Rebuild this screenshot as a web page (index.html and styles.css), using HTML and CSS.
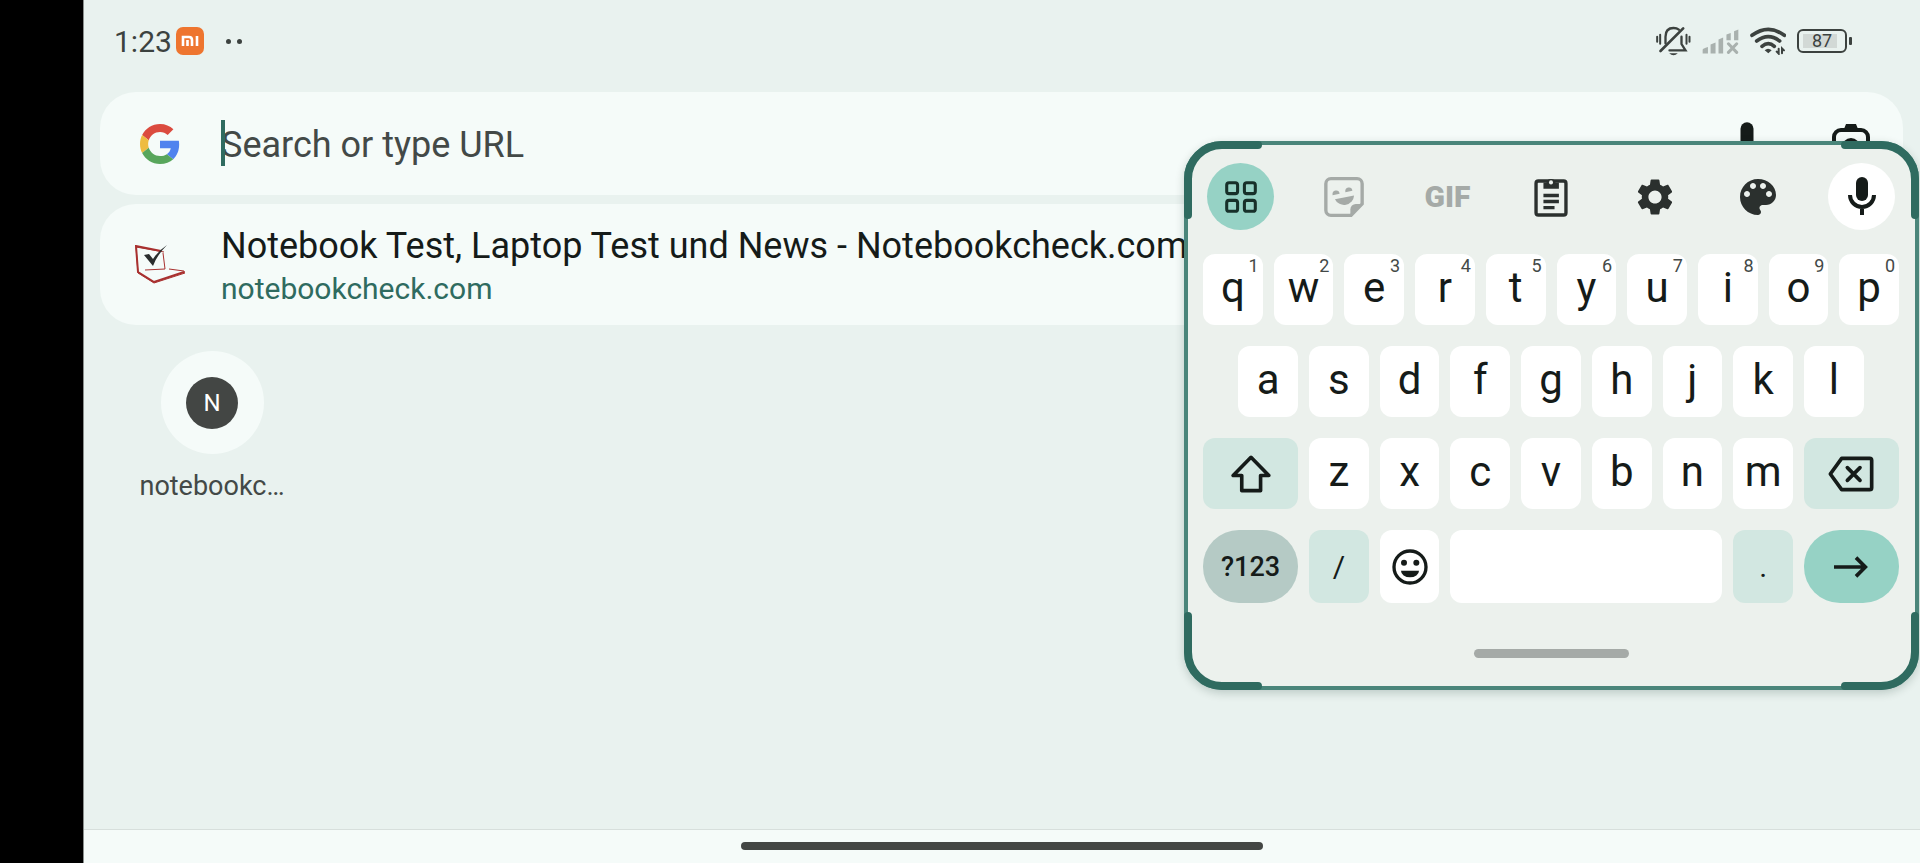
FILE: index.html
```
<!DOCTYPE html>
<html lang="en">
<head>
    <meta charset="UTF-8">
    <meta name="viewport" content="width=device-width, initial-scale=1.0">
    <title>Search</title>
    <link rel="stylesheet" href="styles.css">
</head>
<body>
    <div class="cutout"></div>
    <div class="screen">
        <header class="status-bar">
            <span class="clock">1:23</span>
            <svg class="mi-logo" viewBox="0 0 28 28">
                <rect width="28" height="28" rx="7" fill="#ee752f"/>
                <path d="M7 19V10h6q3 0 3 3v6M11.500 13v6M21 9v10" fill="none" stroke="#fff" stroke-width="2.600"/>
            </svg>
            <span class="dots"><i></i><i></i></span>
            <div class="status-icons">
                <svg class="bell" viewBox="114 80 104 90" fill="none" stroke="#3c423f" stroke-width="7" stroke-linecap="round">
                    <path d="M117 112v15M126 106v27M205 106v27M214 112v15" stroke-width="6"/>
                    <path d="M142 132v-20q0-26 24-26 10 0 16 5M190 112v22l12 19h-48"/>
                    <path d="M127 155L195 87" stroke-width="8"/>
                    <path d="M153 162h26q-13 12-26 0z" fill="#3c423f" stroke="none"/>
                </svg>
                <svg class="signal" viewBox="250 88 112 74" fill="#a9b1ae">
                    <path d="M252 150q0-3 16-8v19h-16zM276 134l15-6v33h-15zM300 119l14-6v48h-14zM324 104l13-5v22h-13zM347 94l13-5v32h-13z"/>
                    <path d="M330 132l25 26M355 132l-25 26" stroke="#a9b1ae" stroke-width="9" stroke-linecap="round"/>
                </svg>
                <svg class="wifi" viewBox="391 84 108 84" fill="none" stroke="#3c423f" stroke-width="11" stroke-linecap="round">
                    <path d="M397 109q49-36 97 0M411 126q35-26 69 0M427 142q19-16 37 0"/>
                    <path d="M435 154q10-9 21 0l-10 9z" fill="#3c423f" stroke="none"/>
                    <path d="M477 149v15l-6-6M487 163v-15l6 6" stroke-width="6"/>
                </svg>
                <span class="battery">87</span>
            </div>
        </header>

        <main class="results">
            <div class="card search-box">
                <svg class="google" viewBox="0 0 48 48">
                    <path fill="#db4b3f" d="M24 9.500c3.540 0 6.710 1.220 9.210 3.600l6.850-6.850C35.900 2.380 30.470 0 24 0 14.620 0 6.510 5.380 2.560 13.220l7.980 6.190C12.430 13.720 17.740 9.500 24 9.500z"/>
                    <path fill="#5083ee" d="M46.980 24.550c0-1.570-.15-3.090-.38-4.550H24v9.020h12.940c-.58 2.960-2.260 5.480-4.780 7.180l7.730 6c4.510-4.180 7.090-10.360 7.090-17.650z"/>
                    <path fill="#eebc40" d="M10.530 28.590c-.48-1.450-.76-2.990-.76-4.590s.27-3.140.76-4.590l-7.980-6.190C.92 16.460 0 20.120 0 24c0 3.880.92 7.540 2.560 10.780l7.970-6.190z"/>
                    <path fill="#58a65c" d="M24 48c6.480 0 11.930-2.130 15.890-5.810l-7.730-6c-2.150 1.450-4.920 2.300-8.160 2.300-6.260 0-11.570-4.220-13.470-9.910l-7.980 6.190C6.510 42.620 14.620 48 24 48z"/>
                </svg>
                <div class="field">
                    <span class="caret"></span>
                    <input type="text" aria-label="Search or type URL" placeholder="Search or type URL">
                </div>
                <button class="plain" aria-label="Voice search">
                    <svg class="box-icon" viewBox="0 0 24 24"><use href="#mic"/></svg>
                </button>
                <button class="plain" aria-label="Search with camera">
                    <svg class="box-icon" viewBox="0 0 52 52" fill="none" stroke="#151b19" stroke-width="4">
                        <path d="M19 11l2-5h10l2 5z" fill="#151b19" stroke="none"/>
                        <rect x="9" y="12" width="34" height="32" rx="7"/>
                        <circle cx="26" cy="29" r="7"/>
                    </svg>
                </button>
            </div>

            <a class="card suggestion" href="#">
                <svg class="favicon" viewBox="0 0 50 40" fill="none">
                    <path d="M29 7L1 2l2 26 16 10 31-10-1-2-15-2" stroke="#a8302f" stroke-width="1"/>
                    <path d="M26 6L1 1l2 26 16 10 30-10" stroke="#a8302f" stroke-width="2"/>
                    <path d="M28 8l2 16-20 1" stroke="#a8302f" stroke-width="1"/>
                    <path d="M9 10l5-1 4 5Q23 6 32 0 22 10 18 21z" fill="#2a2e2e"/>
                </svg>
                <span class="suggestion-text">
                    <span class="title">Notebook Test, Laptop Test und News - Notebookcheck.com</span>
                    <span class="url">notebookcheck.com</span>
                </span>
            </a>

            <a class="tile" href="#">
                <span class="tile-icon"><span class="tile-letter">N</span></span>
                <span class="tile-label">notebookc…</span>
            </a>
        </main>

        <footer class="nav-bar"><span class="nav-pill"></span></footer>
    </div>

    <section class="keyboard" aria-label="Keyboard">
        <svg class="corner top-left" viewBox="0 0 78 78"><use href="#corner"/></svg>
        <svg class="corner top-right" viewBox="0 0 78 78"><use href="#corner"/></svg>
        <svg class="corner bottom-left" viewBox="0 0 78 78"><use href="#corner"/></svg>
        <svg class="corner bottom-right" viewBox="0 0 78 78"><use href="#corner"/></svg>

        <div class="toolbar">
            <button class="tool active" aria-label="Menu">
                <svg width="32" height="32" viewBox="0 0 94 94" fill="none" stroke="#17302a" stroke-width="9">
                    <rect x="5" y="5" width="32" height="32" rx="7"/>
                    <rect x="57" y="5" width="32" height="32" rx="7"/>
                    <rect x="5" y="57" width="32" height="32" rx="7"/>
                    <rect x="57" y="57" width="32" height="32" rx="7"/>
                </svg>
            </button>
            <button class="tool" aria-label="Stickers">
                <svg width="40" height="40" viewBox="0 0 118 119" fill="#a5aaa7">
                    <path d="M20 5h78a15 15 0 0 1 15 15v60l-33 34H20a15 15 0 0 1-15-15V20A15 15 0 0 1 20 5z" fill="none" stroke="#a5aaa7" stroke-width="10"/>
                    <path d="M78 114V96a16 16 0 0 1 16-16h19z"/>
                    <path d="M25 54a10 11 0 0 1 21-4zM63 45a10 11 0 0 1 21-4z"/>
                    <path d="M32 66l57-11A30 30 0 0 1 32 66z"/>
                </svg>
            </button>
            <button class="tool gif">GIF</button>
            <button class="tool" aria-label="Clipboard">
                <svg width="34" height="40" viewBox="0 0 99 119" fill="none" stroke="#2b302e" stroke-width="10">
                    <rect x="5" y="12" width="89" height="101" rx="7"/>
                    <path d="M27 16h9a14 14 0 0 1 27 0h10v19H27z" fill="#2b302e" stroke="none"/>
                    <circle cx="49.500" cy="16" r="6" fill="#ecf1ed" stroke="none"/>
                    <path d="M27 55h46M27 73h46M27 91h33"/>
                </svg>
            </button>
            <button class="tool" aria-label="Settings">
                <svg width="44" height="44" viewBox="0 0 24 24" fill="#2b302e">
                    <path d="M19.140 12.940c.04-.3.06-.61.06-.94 0-.32-.02-.64-.07-.94l2.030-1.580c.18-.14.23-.41.12-.61l-1.920-3.320c-.12-.22-.37-.29-.59-.22l-2.390.96c-.5-.38-1.030-.7-1.620-.94l-.36-2.540c-.04-.24-.24-.41-.48-.41h-3.840c-.24 0-.43.17-.47.41l-.36 2.540c-.59.24-1.130.57-1.620.94l-2.390-.96c-.22-.08-.47 0-.59.22L2.740 8.870c-.12.21-.08.47.12.61l2.030 1.580c-.05.3-.09.63-.09.94s.02.64.07.94l-2.030 1.580c-.18.14-.23.41-.12.61l1.920 3.320c.12.22.37.29.59.22l2.390-.96c.5.38 1.030.7 1.620.94l.36 2.540c.05.24.24.41.48.41h3.840c.24 0 .44-.17.47-.41l.36-2.540c.59-.24 1.130-.56 1.620-.94l2.390.96c.22.08.47 0 .59-.22l1.920-3.320c.12-.22.07-.47-.12-.61l-2.010-1.580zM12 15.600c-1.980 0-3.600-1.620-3.600-3.600s1.620-3.600 3.600-3.600 3.600 1.620 3.600 3.600-1.620 3.600-3.600 3.600z"/>
                </svg>
            </button>
            <button class="tool" aria-label="Theme">
                <svg width="48" height="48" viewBox="0 0 24 24" fill="#2b302e">
                    <path d="M12 3c-4.970 0-9 4.030-9 9s4.030 9 9 9c.83 0 1.500-.67 1.500-1.500 0-.39-.15-.74-.39-1.010-.23-.26-.38-.61-.38-.99 0-.83.67-1.500 1.500-1.500H16c2.760 0 5-2.240 5-5 0-4.420-4.030-8-9-8zm-5.500 9c-.83 0-1.500-.67-1.500-1.500S5.670 9 6.500 9 8 9.670 8 10.500 7.330 12 6.500 12zm3-4C8.670 8 8 7.330 8 6.500S8.670 5 9.500 5s1.500.67 1.500 1.500S10.330 8 9.500 8zm5 0c-.83 0-1.500-.67-1.500-1.500S13.670 5 14.500 5s1.500.67 1.500 1.500S15.330 8 14.500 8zm3 4c-.83 0-1.500-.67-1.500-1.500S16.670 9 17.500 9s1.500.67 1.500 1.500-.67 1.500-1.500 1.500z"/>
                </svg>
            </button>
            <button class="tool voice" aria-label="Voice input">
                <svg width="48" height="48" viewBox="0 0 24 24">
                    <g id="mic">
                        <rect x="9" y="2" width="6" height="12" rx="3" fill="#151b19"/>
                        <path d="M6 11a6 6 0 0 0 12 0M12 17v4" fill="none" stroke="#151b19" stroke-width="2"/>
                    </g>
                </svg>
            </button>
        </div>

        <div class="keys">
            <button class="key">q<sup>1</sup></button>
            <button class="key">w<sup>2</sup></button>
            <button class="key">e<sup>3</sup></button>
            <button class="key">r<sup>4</sup></button>
            <button class="key">t<sup>5</sup></button>
            <button class="key">y<sup>6</sup></button>
            <button class="key">u<sup>7</sup></button>
            <button class="key">i<sup>8</sup></button>
            <button class="key">o<sup>9</sup></button>
            <button class="key">p<sup>0</sup></button>

            <button class="key indent">a</button>
            <button class="key">s</button>
            <button class="key">d</button>
            <button class="key">f</button>
            <button class="key">g</button>
            <button class="key">h</button>
            <button class="key">j</button>
            <button class="key">k</button>
            <button class="key">l</button>

            <button class="key icon-key wide tinted row-start" aria-label="Shift">
                <svg width="40" height="38" viewBox="184 133 120 115" fill="none" stroke="#151b19" stroke-width="11" stroke-linejoin="round">
                    <path d="M244 140l-54 55h26v46h57v-46h25z"/>
                </svg>
            </button>
            <button class="key">z</button>
            <button class="key">x</button>
            <button class="key">c</button>
            <button class="key">v</button>
            <button class="key">b</button>
            <button class="key">n</button>
            <button class="key">m</button>
            <button class="key icon-key wide tinted" aria-label="Backspace">
                <svg width="46" height="36" viewBox="925 143 138 108" fill="none" stroke="#151b19" stroke-width="11" stroke-linejoin="round" stroke-linecap="round">
                    <path d="M966 150h84q6 0 6 6v82q0 6-6 6h-84l-34-47zM983 178l38 38M1021 178l-38 38"/>
                </svg>
            </button>

            <button class="key wide symbols">?123</button>
            <button class="key small tinted">/</button>
            <button class="key icon-key" aria-label="Emoji">
                <svg width="36" height="36" viewBox="-54 -54 108 108" fill="#151b19">
                    <circle r="48" fill="none" stroke="#151b19" stroke-width="10"/>
                    <circle cx="-18" cy="-13" r="9"/>
                    <circle cx="19" cy="-13" r="9"/>
                    <path d="M-27 11h54a27 20 0 0 1-54 0z"/>
                </svg>
            </button>
            <button class="key space" aria-label="Space"></button>
            <button class="key small tinted">.</button>
            <button class="key icon-key wide enter" aria-label="Go">
                <svg width="34" height="22" viewBox="943 437 102 66" fill="none" stroke="#151b19" stroke-width="11">
                    <path d="M943 470h93M1009 442l28 28-28 28"/>
                </svg>
            </button>
        </div>

        <div class="handle"></div>
    </section>

    <svg class="defs">
        <defs>
            <path id="corner" d="M4 74V38A34 34 0 0 1 38 4H74" fill="none" stroke="#2f6b60" stroke-width="8" stroke-linecap="round"/>
        </defs>
    </svg>
</body>
</html>
```
FILE: styles.css
```
* {
    box-sizing: border-box;
}
body {
    display: flex;
    min-height: 100vh;
    margin: 0;
    position: relative;
    overflow: hidden;
    font-family: Roboto, "Liberation Sans", sans-serif;
    color: #151b19;
    background-color: #e9f2ef;
}
button {
    border: none;
    padding: 0;
    font-family: inherit;
    color: inherit;
    background: none;
    cursor: pointer;
}
a {
    color: inherit;
    text-decoration: none;
}
svg {
    display: block;
    flex-shrink: 0;
}
.defs {
    position: absolute;
    width: 0;
    height: 0;
}
.cutout {
    flex: 0 0 84px;
    background-color: #000;
    border-right: 1px solid #8a8f8d;
}
.screen {
    flex: 1;
    min-width: 0;
    display: flex;
    flex-direction: column;
}

/* status bar */
.status-bar {
    display: flex;
    align-items: center;
    height: 84px;
    padding: 0 73px 2px 30px;
    color: #3c423f;
}
.clock {
    font-size: 30px;
    font-weight: 400;
}
.mi-logo {
    width: 28px;
    height: 28px;
    margin-left: 4px;
}
.dots {
    display: flex;
    gap: 6px;
    margin-left: 22px;
}
.dots i {
    width: 5px;
    height: 5px;
    border-radius: 50%;
    background-color: #3c423f;
}
.status-icons {
    display: flex;
    align-items: center;
    gap: 11px;
    margin-left: auto;
}
.bell {
    width: 35px;
    height: 30px;
}
.signal {
    width: 37px;
    height: 25px;
}
.wifi {
    width: 36px;
    height: 28px;
}
.battery {
    position: relative;
    width: 50px;
    height: 24px;
    border: 2px solid #3c423f;
    border-radius: 6px;
    font-size: 18px;
    line-height: 20px;
    text-align: center;
    background: linear-gradient(90deg, #d2d9d6 34px, transparent 34px) 4px 3px / 38px 14px no-repeat;
}
.battery::after {
    content: "";
    position: absolute;
    right: -7px;
    top: 6px;
    width: 3px;
    height: 8px;
    border-radius: 1px;
    background-color: #3c423f;
}

/* omnibox and suggestions */
.results {
    flex: 1;
    display: flex;
    flex-direction: column;
    gap: 9px;
    padding: 8px 17px 0 16px;
}
.card {
    display: flex;
    align-items: center;
    border-radius: 36px;
    background-color: #f5fbf9;
}
.search-box {
    height: 103px;
    padding: 0 26px 0 40px;
}
.google {
    width: 40px;
    height: 40px;
}
.field {
    position: relative;
    flex: 1;
    margin-left: 41px;
}
.field input {
    display: block;
    width: 100%;
    padding: 2px 0 0;
    border: none;
    outline: none;
    font-family: inherit;
    font-size: 36px;
    line-height: 46px;
    background: none;
}
.field input::placeholder {
    color: #434947;
    opacity: 1;
}
.caret {
    position: absolute;
    left: 0;
    top: 0;
    width: 4px;
    height: 46px;
    background-color: #2f6b60;
}
.plain {
    margin-left: 52px;
}
.box-icon {
    width: 52px;
    height: 52px;
}
.suggestion {
    height: 121px;
    padding: 0 35px;
}
.favicon {
    width: 50px;
    height: 40px;
}
.suggestion-text {
    display: flex;
    flex-direction: column;
    margin-left: 36px;
    padding-top: 4px;
    white-space: nowrap;
}
.title {
    font-size: 36px;
    line-height: 44px;
}
.url {
    font-size: 30px;
    line-height: 42px;
    color: #2f6b60;
}
.tile {
    display: flex;
    flex-direction: column;
    align-items: center;
    gap: 16px;
    width: 150px;
    margin: 17px 0 0 37px;
    color: #434947;
}
.tile-icon {
    display: flex;
    align-items: center;
    justify-content: center;
    width: 103px;
    height: 103px;
    border-radius: 50%;
    background-color: #f5fbf9;
}
.tile-letter {
    width: 52px;
    height: 52px;
    border-radius: 50%;
    font-size: 24px;
    line-height: 52px;
    text-align: center;
    color: #fff;
    background-color: #434644;
}
.tile-label {
    font-size: 27px;
    line-height: 32px;
    white-space: nowrap;
}

/* system navigation */
.nav-bar {
    display: flex;
    justify-content: center;
    height: 34px;
    padding-top: 12px;
    border-top: 1px solid #d7dfdc;
    background-color: #f5fbf9;
}
.nav-pill {
    width: 522px;
    height: 8px;
    border-radius: 4px;
    background-color: #434644;
}

/* floating keyboard */
.keyboard {
    position: absolute;
    top: 141px;
    right: 1px;
    width: 735px;
    padding: 18px 16px 28px 15px;
    border: 4px solid #4a857a;
    border-radius: 38px;
    background-color: #ecf1ed;
    box-shadow: 0 3px 10px rgba(0, 40, 30, 0.2);
}
.corner {
    position: absolute;
    width: 78px;
    height: 78px;
}
.top-left {
    top: -4px;
    left: -4px;
}
.top-right {
    top: -4px;
    right: -4px;
    transform: rotate(90deg);
}
.bottom-right {
    bottom: -4px;
    right: -4px;
    transform: rotate(180deg);
}
.bottom-left {
    bottom: -4px;
    left: -4px;
    transform: rotate(270deg);
}
.toolbar {
    display: flex;
    justify-content: space-between;
    padding: 0 4px;
}
.tool {
    display: flex;
    align-items: center;
    justify-content: center;
    width: 67px;
    height: 67px;
    border-radius: 50%;
}
.active, .enter {
    background-color: #96d2c5;
}
.voice {
    background-color: #fff;
}
.gif {
    font-size: 30px;
    font-weight: 900;
    color: #a5aaa7;
}
.keys {
    display: grid;
    grid-template-columns: repeat(20, 1fr);
    grid-template-rows: 71px 71px 71px 73px;
    gap: 21px 11px;
    margin-top: 24px;
}
.key {
    position: relative;
    grid-column: span 2;
    padding-bottom: 5px;
    border-radius: 12px;
    font-size: 42px;
    background-color: #fff;
}
.key sup {
    position: absolute;
    top: 2px;
    right: 4px;
    font-size: 18px;
    line-height: 20px;
    color: #434947;
}
.indent {
    grid-column: 2 / span 2;
}
.wide {
    grid-column: span 3;
}
.row-start {
    grid-column: 1 / span 3;
}
.space {
    grid-column: span 8;
}
.icon-key {
    display: flex;
    align-items: center;
    justify-content: center;
    padding-bottom: 0;
}
.tinted {
    background-color: #d2e7e1;
}
.small {
    padding-bottom: 0;
    font-size: 30px;
}
.symbols {
    padding-bottom: 0;
    font-size: 27px;
    font-weight: 500;
    background-color: #b5cac5;
}
.symbols, .enter {
    border-radius: 36px;
}
.enter {
    background-color: #96d2c5;
}
.handle {
    width: 155px;
    height: 9px;
    margin: 46px auto 0;
    border-radius: 5px;
    background-color: #a5aaa7;
}
```
